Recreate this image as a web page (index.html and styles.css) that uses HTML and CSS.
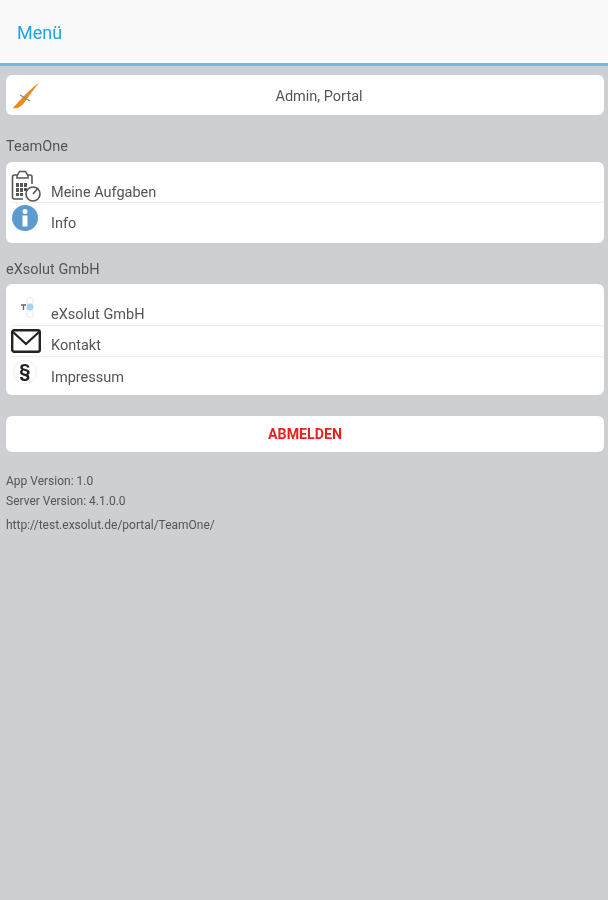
FILE: index.html
```html
<!DOCTYPE html>
<html lang="de">

<head>
    <meta charset="UTF-8">
    <meta name="viewport" content="width=device-width, initial-scale=1.0">
    <title>Menü</title>

    <link rel="stylesheet" href="styles.css">
</head>

<body>
    <header class="topbar">
        <span class="topbar-title">Menü</span>
    </header>

    <main class="content">
        <div class="card user-card">
            <svg class="user-icon" width="28" height="28" viewBox="0 0 28 28">
                <path d="M27 0C22 3 17 8 13 12C9 16 5 20 1 25C5 26 9 24 12 20C16 14 22 6 27 0Z" fill="#ee8a16"/>
                <path d="M8 12L18 18" stroke="#8a8a8a" stroke-width="1.400" fill="none"/>
            </svg>
            <span class="user-name">Admin, Portal</span>
        </div>

        <div class="section-label">TeamOne</div>
        <div class="card">
            <div class="row row-first">
                <svg class="row-icon" width="32" height="32" viewBox="0 0 32 32">
                    <path d="M7 5H4.500Q2.500 5 2.500 7V27Q2.500 29 4.500 29H13M22 14V7Q22 5 20 5H18" fill="none" stroke="#555" stroke-width="1.600"/>
                    <path d="M7 6L9.500 1.500H15.500L18 6V8H7Z" fill="#fff" stroke="#555" stroke-width="1.500"/>
                    <path d="M6 13h3v4H6zM10 13h3v4h-3zM14 13h3v4h-3zM6 18h3v4H6zM10 18h3v4h-3zM14 18h3v3h-3zM6 23h3v3H6zM10 23h3v3h-3z" fill="#555"/>
                    <circle cx="23" cy="24" r="7" fill="#fff" stroke="#555" stroke-width="1.600"/>
                    <path d="M23 24L28 18" stroke="#555" stroke-width="1.600"/>
                </svg>
                <span class="row-text">Meine Aufgaben</span>
            </div>
            <div class="row row-info">
                <svg class="row-icon" width="26" height="26" viewBox="0 0 26 26">
                    <circle cx="13" cy="13" r="13" fill="#5b9bd0"/>
                    <circle cx="13" cy="6.500" r="2.500" fill="#fff"/>
                    <path d="M10.500 10.500h5v11h-5z" fill="#fff"/>
                </svg>
                <span class="row-text">Info</span>
            </div>
        </div>

        <div class="section-label section-label-second">eXsolut GmbH</div>
        <div class="card">
            <div class="row row-exsolut">
                <svg class="row-icon" width="24" height="24" viewBox="0 0 24 24">
                    <circle cx="15" cy="5" r="3.500" fill="none" stroke="#e4e8ec" stroke-width="1"/>
                    <circle cx="15" cy="11" r="3.500" fill="#a9d3f2"/>
                    <circle cx="15" cy="18" r="3.500" fill="none" stroke="#e4e8ec" stroke-width="1"/>
                    <path d="M6 9h5M8.500 9v5" stroke="#666" stroke-width="1.300" fill="none"/>
                </svg>
                <span class="row-text">eXsolut GmbH</span>
            </div>
            <div class="row row-mail">
                <svg class="row-icon" width="30" height="24" viewBox="0 0 30 24">
                    <rect x="1.200" y="1.200" width="27.600" height="21.600" rx="2" fill="#fff" stroke="#222" stroke-width="2.400"/>
                    <path d="M2 3L15 15L28 3" fill="none" stroke="#222" stroke-width="2.200"/>
                </svg>
                <span class="row-text">Kontakt</span>
            </div>
            <div class="row row-law">
                <span class="law-icon">§</span>
                <span class="row-text">Impressum</span>
            </div>
        </div>

        <button class="logout" type="button">ABMELDEN</button>

        <div class="version">
            <div>App Version: 1.0</div>
            <div>Server Version: 4.1.0.0</div>
        </div>
        <div class="server-url">http://test.exsolut.de/portal/TeamOne/</div>
    </main>
</body>

</html>
```

FILE: styles.css
```css
body {
    margin: 0;
    min-height: 900px;
    background-color: #cdcfd3;
    font-family: Roboto, "Liberation Sans", sans-serif;
    color: #555;
}

.topbar {
    height: 66px;
    display: flex;
    align-items: center;
    padding: 2px 0 0 17px;
    box-sizing: border-box;
    background-color: #f9f9fa;
    border-bottom: 3px solid #74b9e2;
}

.topbar-title {
    font-size: 18px;
    color: #1ea4e6;
    filter: blur(0.3px);
}

.content {
    padding: 9px 4px 0 6px;
    filter: blur(0.4px);
}

.card {
    background-color: #fff;
    border-radius: 6px;
}

.user-card {
    height: 40px;
    display: flex;
    align-items: center;
    position: relative;
}

.user-icon {
    position: absolute;
    left: 6px;
    top: 8px;
}

.user-name {
    flex: 1;
    text-align: center;
    font-size: 14.5px;
    padding: 2px 0 0 28px;
}

.section-label {
    font-size: 14.5px;
    line-height: 16px;
    margin: 24px 0 7px;
}

.section-label-second {
    margin: 19px 0 6px;
}

.row {
    display: flex;
    align-items: flex-end;
    margin-left: 5px;
    box-sizing: border-box;
    position: relative;
}

.row + .row {
    border-top: 1px solid #eceef0;
}

.row-first {
    height: 40px;
}

.row-info {
    height: 41px;
}

.row-exsolut {
    height: 41px;
}

.row-mail {
    height: 31px;
}

.row-law {
    height: 39px;
}

.row-text {
    font-size: 14.5px;
    line-height: 16px;
    margin-left: 40px;
    padding-bottom: 1px;
}

.row-info .row-text {
    padding-bottom: 11px;
}

.row-exsolut .row-text {
    padding-bottom: 2px;
}

.row-mail .row-text {
    padding-bottom: 2px;
}

.row-law .row-text {
    padding-bottom: 9px;
}

.row-icon {
    position: absolute;
}

.row-first .row-icon {
    left: -1px;
    top: 8px;
}

.row-info .row-icon {
    left: 1px;
    top: 2px;
}

.row-exsolut .row-icon {
    left: 4px;
    top: 12px;
}

.row-mail .row-icon {
    left: 0;
    top: 3px;
}

.law-icon {
    position: absolute;
    left: 2px;
    top: 3px;
    width: 24px;
    height: 24px;
    padding-bottom: 3px;
    box-sizing: border-box;
    border: 1px solid #eee;
    border-radius: 50%;
    display: flex;
    align-items: center;
    justify-content: center;
    font-size: 18px;
    font-weight: bold;
    color: #222;
}

.logout {
    display: block;
    width: 100%;
    height: 36px;
    margin-top: 21px;
    border: none;
    border-radius: 6px;
    background-color: #fff;
    color: #f01d1d;
    font-family: Roboto, "Liberation Sans", sans-serif;
    font-size: 14.2px;
    font-weight: bold;
}

.version {
    margin-top: 19px;
    font-size: 12px;
    line-height: 20px;
}

.server-url {
    margin-top: 6px;
    font-size: 12px;
    line-height: 16px;
}
```
